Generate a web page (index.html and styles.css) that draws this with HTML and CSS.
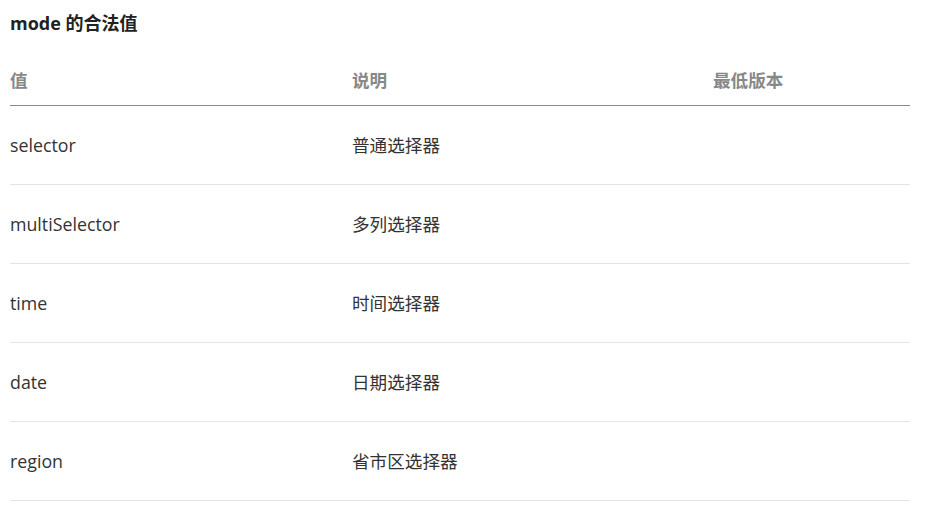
FILE: index.html
```html
<!DOCTYPE html>
<html lang="zh-CN">
<head>
<meta charset="utf-8">
<link rel="stylesheet" href="styles.css">
<title>mode 的合法值</title>
</head>
<body>
<div class="doc">
  <h3 class="title">mode 的合法值</h3>
  <table class="values">
    <colgroup>
      <col class="c1"><col class="c2"><col class="c3">
    </colgroup>
    <thead>
      <tr><th>值</th><th>说明</th><th>最低版本</th></tr>
    </thead>
    <tbody>
      <tr><td>selector</td><td>普通选择器</td><td></td></tr>
      <tr><td>multiSelector</td><td>多列选择器</td><td></td></tr>
      <tr><td>time</td><td>时间选择器</td><td></td></tr>
      <tr><td>date</td><td>日期选择器</td><td></td></tr>
      <tr><td>region</td><td>省市区选择器</td><td></td></tr>
    </tbody>
  </table>
</div>
</body>
</html>
```

FILE: styles.css
```css
html, body {
  margin: 0;
  padding: 0;
  background: #ffffff;
}
body {
  font-family: "Open Sans", "Noto Sans CJK SC", sans-serif;
  color: #333333;
  font-size: 17.6px;
}
.doc {
  padding: 11px 10px 0 10px;
}
.title {
  margin: 0;
  font-size: 18px;
  line-height: 24px;
  font-weight: 700;
  color: #222222;
}
.values {
  width: 900px;
  border-collapse: collapse;
  table-layout: fixed;
  margin-top: 20px;
}
.c1 { width: 342px; }
.c2 { width: 361px; }
.c3 { width: 197px; }
.values th {
  text-align: left;
  font-weight: 700;
  color: #888888;
  font-size: 17.6px;
  line-height: 24px;
  padding: 13px 0 13px 0;
  border-bottom: 1px solid #8a8a8a;
}
.values td {
  padding: 27px 0;
  line-height: 24px;
  border-bottom: 1px solid #e5e5e5;
  height: 24px;
  font-size: 17.6px;
}
.values td:first-child {
  font-size: 17.8px;
}
```
